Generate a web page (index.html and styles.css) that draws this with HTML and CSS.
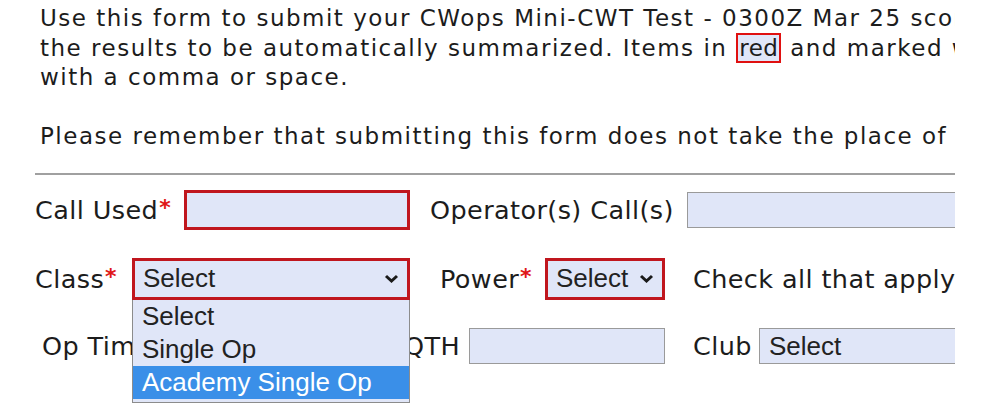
FILE: index.html
```html
<!DOCTYPE html>
<html>
<head>
  <title>CWops Mini-CWT Test Score Submission</title>
  <link rel="stylesheet" href="styles.css">
</head>
<body>
  <div class="page">
    <p class="intro">
      Use this form to submit your CWops Mini-CWT Test - 0300Z Mar 25 score. The form allows<br>
      the results to be automatically summarized. Items in <span class="req-sample">red</span> and marked with * are required.<br>
      with a comma or space.
    </p>
    <p class="intro notice">
      Please remember that submitting this form does not take the place of submitting your log.
    </p>
    <hr class="rule">

    <form class="score-form">
      <div class="row">
        <label class="lbl w-call">Call Used<span class="star">*</span></label>
        <input class="field required w-226" type="text">
        <label class="lbl w-ops">Operator(s) Call(s)</label>
        <input class="field w-300" type="text">
      </div>

      <div class="row">
        <label class="lbl w-class">Class<span class="star">*</span></label>
        <div class="select-wrap">
          <div class="select required w-278">
            <span>Select</span>
            <svg class="chev" width="15" height="9" viewBox="0 0 15 9"><polyline points="2,2 7.5,7 13,2" fill="none" stroke="#1a1a1a" stroke-width="3"/></svg>
          </div>
          <ul class="dropdown">
            <li>Select</li>
            <li>Single Op</li>
            <li class="active">Academy Single Op</li>
          </ul>
        </div>
        <label class="lbl w-power">Power<span class="star">*</span></label>
        <div class="select required w-120">
          <span>Select</span>
          <svg class="chev" width="15" height="9" viewBox="0 0 15 9"><polyline points="2,2 7.5,7 13,2" fill="none" stroke="#1a1a1a" stroke-width="3"/></svg>
        </div>
        <span class="lbl ml-28">Check all that apply</span>
      </div>

      <div class="row row-indent">
        <label class="lbl w-optime">Op Time</label>
        <input class="field w-150" type="text">
        <label class="lbl w-qth">QTH</label>
        <input class="field w-196" type="text">
        <label class="lbl w-club">Club</label>
        <div class="select plain w-260">
          <span>Select</span>
        </div>
      </div>
    </form>
  </div>
</body>
</html>
```

FILE: styles.css
```css
:root {
  --field-bg: #e0e6f8;
  --req-red: #c0161e;
  --ink: #1c1c1c;
}

body {
  margin: 0;
  background: #fff;
  color: var(--ink);
  font-family: 'DejaVu Sans', Verdana, sans-serif;
}

.page {
  width: 955px;
  height: 412px;
  overflow: hidden;
  padding-top: 4px;
  box-sizing: border-box;
}

.intro {
  margin: 0 0 29px 40px;
  font-size: 23px;
  line-height: 29.5px;
  letter-spacing: 1.5px;
  white-space: nowrap;
}

.intro.notice {
  margin-bottom: 0;
}

.req-sample {
  background: var(--field-bg);
  border: 2px solid #e01010;
  padding: 0 1px;
  letter-spacing: 0.5px;
}

.rule {
  margin: 22px 0 0 35px;
  border: none;
  border-top: 2px solid #a0a0a0;
}

.score-form {
  margin: 0;
  padding-left: 35px;
}

.row {
  display: flex;
  align-items: center;
  height: 69px;
  white-space: nowrap;
}

.row-indent {
  padding-left: 7px;
  height: 66px;
}

.lbl {
  font-size: 25.5px;
  letter-spacing: 0.4px;
  flex-shrink: 0;
}

.star {
  color: #e01818;
  font-size: 22px;
  font-weight: bold;
  vertical-align: 4px;
  margin-left: 1px;
}

.field {
  box-sizing: border-box;
  height: 36px;
  background: var(--field-bg);
  border: 1px solid #9a9a9a;
  flex-shrink: 0;
  margin: 0;
}

.field.required {
  height: 40px;
  border: 3px solid var(--req-red);
}

.select {
  box-sizing: border-box;
  display: flex;
  align-items: center;
  justify-content: space-between;
  height: 42px;
  padding: 0 8px 0 8px;
  background: var(--field-bg);
  border: 1px solid #9a9a9a;
  font-family: 'Liberation Sans', Arial, sans-serif;
  font-size: 26px;
  color: #222;
  flex-shrink: 0;
}

.select.required {
  border: 3px solid var(--req-red);
}

.select.plain {
  height: 36px;
  padding-left: 9px;
}

.select-wrap {
  position: relative;
  flex-shrink: 0;
}

.dropdown {
  position: absolute;
  top: 100%;
  left: 0;
  right: 0;
  margin: 0;
  padding: 0 0 3px;
  list-style: none;
  background: var(--field-bg);
  border: 1px solid #8c8c8c;
  border-top: none;
  font-family: 'Liberation Sans', Arial, sans-serif;
  font-size: 26px;
  color: #222;
  z-index: 2;
}

.dropdown li {
  height: 33px;
  line-height: 33px;
  padding-left: 9px;
}

.dropdown li.active {
  background: #3a8fe8;
  color: #fff;
}

.w-call { width: 149px; }
.w-ops { width: 257px; margin-left: 20px; }
.w-class { width: 97px; }
.w-power { width: 105px; margin-left: 30px; }
.w-optime { width: 180px; }
.w-qth { width: 65px; margin-left: 32px; }
.w-club { width: 66px; margin-left: 28px; }
.ml-28 { margin-left: 28px; }

.w-120 { width: 120px; }
.w-150 { width: 150px; }
.w-196 { width: 196px; }
.w-226 { width: 226px; }
.w-260 { width: 260px; }
.w-278 { width: 278px; }
.w-300 { width: 300px; }
```
